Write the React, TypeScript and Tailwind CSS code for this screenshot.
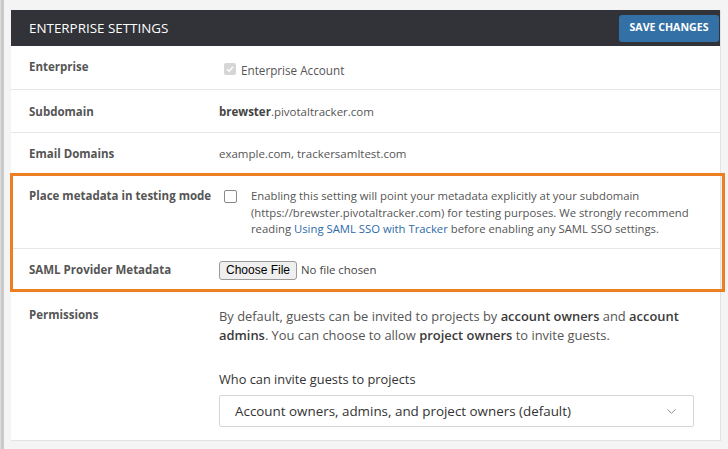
import { ChevronDown } from 'lucide-react'

function Row({
  label,
  children,
  className = '',
}: {
  label: string
  children: React.ReactNode
  className?: string
}) {
  return (
    <div className={`flex border-b border-[#e6e6e6] pl-[18px] pr-4 ${className}`}>
      <div className="w-[190px] shrink-0 text-[11.5px] font-bold leading-4 text-[#555]">{label}</div>
      <div className="flex-1 text-[11.5px] leading-4 text-[#555]">{children}</div>
    </div>
  )
}

export default function App() {
  return (
    <div
      className="flex min-h-screen bg-[#f4f4f4]"
      style={{ fontFamily: '"Open Sans", "Noto Sans", sans-serif' }}
    >
      <div className="w-[4px] shrink-0 border-l border-[#dcdcdc] bg-[#c9c9c9]" />
      <div className="ml-[7px] mt-[10px] mb-[9px] w-[710px] border-r border-b border-[#e2e2e2] bg-white">
        <header className="flex h-9 items-center justify-between bg-[#313338] pl-[18px] pr-[1px]">
          <h1 className="text-[13.4px] text-white">ENTERPRISE SETTINGS</h1>
          <button className="h-[27px] w-[100px] rounded-[3px] bg-[#3370a6] text-[10.6px] font-bold text-white">
            SAVE CHANGES
          </button>
        </header>

        <Row label="Enterprise" className="h-[44px] pt-[13px]">
          <div className="flex items-center gap-[5px] pl-[5px]">
            <span className="flex h-[12px] w-[12px] items-center justify-center rounded-[2px] bg-[#d6d6d6]">
              <svg viewBox="0 0 12 12" className="h-[10px] w-[10px]">
                <path d="M2.5 6.2 L5 8.6 L9.6 3.4" fill="none" stroke="white" strokeWidth="1.8" />
              </svg>
            </span>
            <span className="pt-[3px] text-[11.7px]">Enterprise Account</span>
          </div>
        </Row>

        <Row label="Subdomain" className="h-[43px] pt-[14px]">
          <span className="font-bold text-[#444]">brewster</span>.pivotaltracker.com
        </Row>

        <Row label="Email Domains" className="h-[41px] pt-[13px]">
          example.com, trackersamltest.com
        </Row>

        <div className="relative">
          <Row label="Place metadata in testing mode" className="h-[75px] pt-[14px]">
            <div className="flex">
              <span className="ml-[5px] mt-[2px] h-[13px] w-[13px] shrink-0 rounded-[2px] border border-[#8a8a8a] bg-white" />
              <p className="ml-[14px] text-[11.3px] leading-[16.5px]">
                Enabling this setting will point your metadata explicitly at your subdomain
                (https://brewster.pivotaltracker.com) for testing purposes. We strongly recommend
                reading <a className="text-[#2e6aa8]">Using SAML SSO with Tracker</a> before enabling
                any SAML SSO settings.
              </p>
            </div>
          </Row>
          <Row label="SAML Provider Metadata" className="h-[43px] items-center">
            <div className="flex items-center gap-[4px]">
              <button
                className="h-[19px] rounded-[3px] border border-[#9a9a9a] bg-[#efefef] px-[6px] text-[12px] leading-none text-black"
                style={{ fontFamily: '"Liberation Sans", Arial, sans-serif' }}
              >
                Choose File
              </button>
              <span className="text-[11.4px] text-[#444]">No file chosen</span>
            </div>
          </Row>
          <div className="pointer-events-none absolute -left-[1px] -right-[5px] -top-[1px] bottom-0 border-[3px] border-[#ec7f22]" />
        </div>

        <div className="flex h-[148px] pl-[18px] pr-[26px] pt-[15px]">
          <div className="w-[190px] shrink-0 text-[11.5px] font-bold leading-4 text-[#555]">
            Permissions
          </div>
          <div className="flex-1">
            <p className="text-[12.9px] leading-[19px] text-[#555]">
              By default, guests can be invited to projects by{' '}
              <b className="font-semibold text-[#3a3a3a]">account owners</b> and{' '}
              <b className="font-semibold text-[#3a3a3a]">account admins</b>. You can choose to allow{' '}
              <b className="font-semibold text-[#3a3a3a]">project owners</b> to invite guests.
            </p>
            <p className="mt-[25px] text-[12.8px] text-[#333]">Who can invite guests to projects</p>
            <div className="mt-[6px] flex h-[32px] items-center justify-between rounded-[2px] border border-[#d6d6d6] bg-white pl-[15px] pr-[14px]">
              <span className="text-[13.4px] text-[#333]">Account owners, admins, and project owners (default)</span>
              <ChevronDown className="h-[15px] w-[15px] text-[#888]" strokeWidth={1.5} />
            </div>
          </div>
        </div>
      </div>
    </div>
  )
}
